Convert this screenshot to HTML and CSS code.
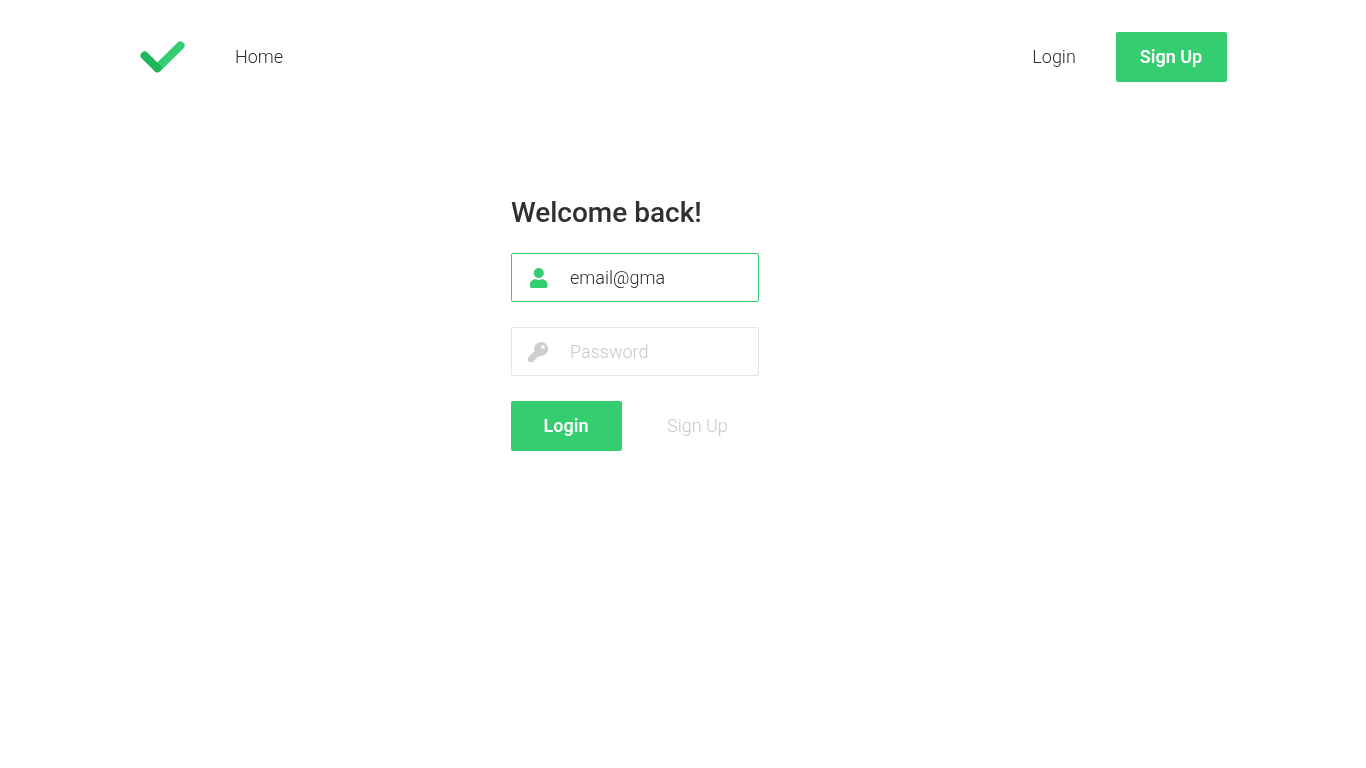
FILE: index.html
```html
<!DOCTYPE html>
<html lang="en">
<head>
<meta charset="utf-8">
<title>Login</title>
<link rel="stylesheet" href="styles.css">
</head>
<body>
<header class="header">
  <a class="logo" href="#" aria-label="Home">
    <svg width="45" height="32" viewBox="0 0 45 32" fill="none" stroke-width="8.200" stroke-linecap="round">
      <path d="M17.300 27.200 40.500 4.500" stroke="#34cd70"/>
      <path d="M4.700 14.700 17.300 27.200" stroke="#1eb75b"/>
    </svg>
  </a>
  <nav class="nav"><a class="link" href="#">Home</a></nav>
  <a class="link" href="#">Login</a>
  <a class="button signup" href="#">Sign Up</a>
</header>
<main class="main">
  <form class="form">
    <h1 class="title">Welcome back!</h1>
    <label class="field active">
      <svg class="icon user" viewBox="0 0 448 512"><path d="M224 256c70.700 0 128-57.300 128-128S294.700 0 224 0 96 57.300 96 128s57.300 128 128 128zm89.600 32h-16.700c-22.200 10.200-46.900 16-72.900 16s-50.600-5.800-72.900-16h-16.700C60.200 288 0 348.200 0 422.400V464c0 26.500 21.500 48 48 48h352c26.500 0 48-21.500 48-48v-41.600c0-74.200-60.200-134.400-134.400-134.400z"/></svg>
      <input class="input" type="text" value="email@gma" aria-label="Email">
    </label>
    <label class="field">
      <svg class="icon" viewBox="0 0 512 512"><path d="M512 176.001C512 273.203 433.202 352 336 352c-11.220 0-22.190-1.062-32.827-3.069l-24.012 27.014A23.999 23.999 0 0 1 261.223 384H224v40c0 13.255-10.745 24-24 24h-40v40c0 13.255-10.745 24-24 24H24c-13.255 0-24-10.745-24-24v-78.059c0-6.365 2.529-12.470 7.029-16.971l161.802-161.802C163.108 213.814 160 195.271 160 176 160 78.798 238.797.001 335.999 0 433.488-.001 512 78.511 512 176.001zM336 128c0 26.510 21.490 48 48 48s48-21.490 48-48-21.490-48-48-48-48 21.490-48 48z"/></svg>
      <input class="input" type="password" placeholder="Password" aria-label="Password">
    </label>
    <div class="actions">
      <button class="button" type="button">Login</button>
      <a class="alternate" href="#">Sign Up</a>
    </div>
  </form>
</main>
</body>
</html>
```
FILE: styles.css
```css
* { box-sizing: border-box; }
body { margin: 0; background: #fff; color: #2d2d2d; font: 300 18px/24px Roboto, sans-serif; }
a { color: inherit; text-decoration: none; }
.header, .main { will-change: transform; }
.header { display: flex; align-items: center; height: 114px; padding: 0 139px 0 140px; }
.logo { display: flex; width: 45px; margin-right: 50px; }
.nav { flex: 1; }
.signup { margin-left: 40.2px; }
.button { display: flex; align-items: center; justify-content: center; width: 111px; height: 50px; padding: 0 1px 0 0; border: 0; border-radius: 2px; background: #34cd70; color: #fff; font: 600 18px/24px Roboto, sans-serif; }
.main { padding: 80px 0 0 511px; }
.form { width: 248px; }
.title { margin: 0; padding: 1px 0 22px; color: #303030; font-size: 28px; line-height: 36px; font-weight: 500; white-space: nowrap; }
.field { display: flex; align-items: center; height: 49px; margin-bottom: 25px; padding-left: 16px; border: 1px solid #e5e5e5; border-radius: 2px; }
.active { border-color: #34cd70; }
.icon { width: 20px; height: 20px; margin-right: 22px; flex: none; fill: #cfcfcf; }
.active .icon { fill: #34cd70; }
.user { width: 17.5px; margin: 0 22.5px 0 2px; }
.input { width: 170px; padding: 0; border: 0; outline: 0; background: none; color: #2d2d2d; font: 300 18px/24px Roboto, sans-serif; }
.input::placeholder { color: #c8c8c8; opacity: 1; }
.actions { display: flex; align-items: center; }
.alternate { margin-left: 45px; color: #c8c8c8; }
```
